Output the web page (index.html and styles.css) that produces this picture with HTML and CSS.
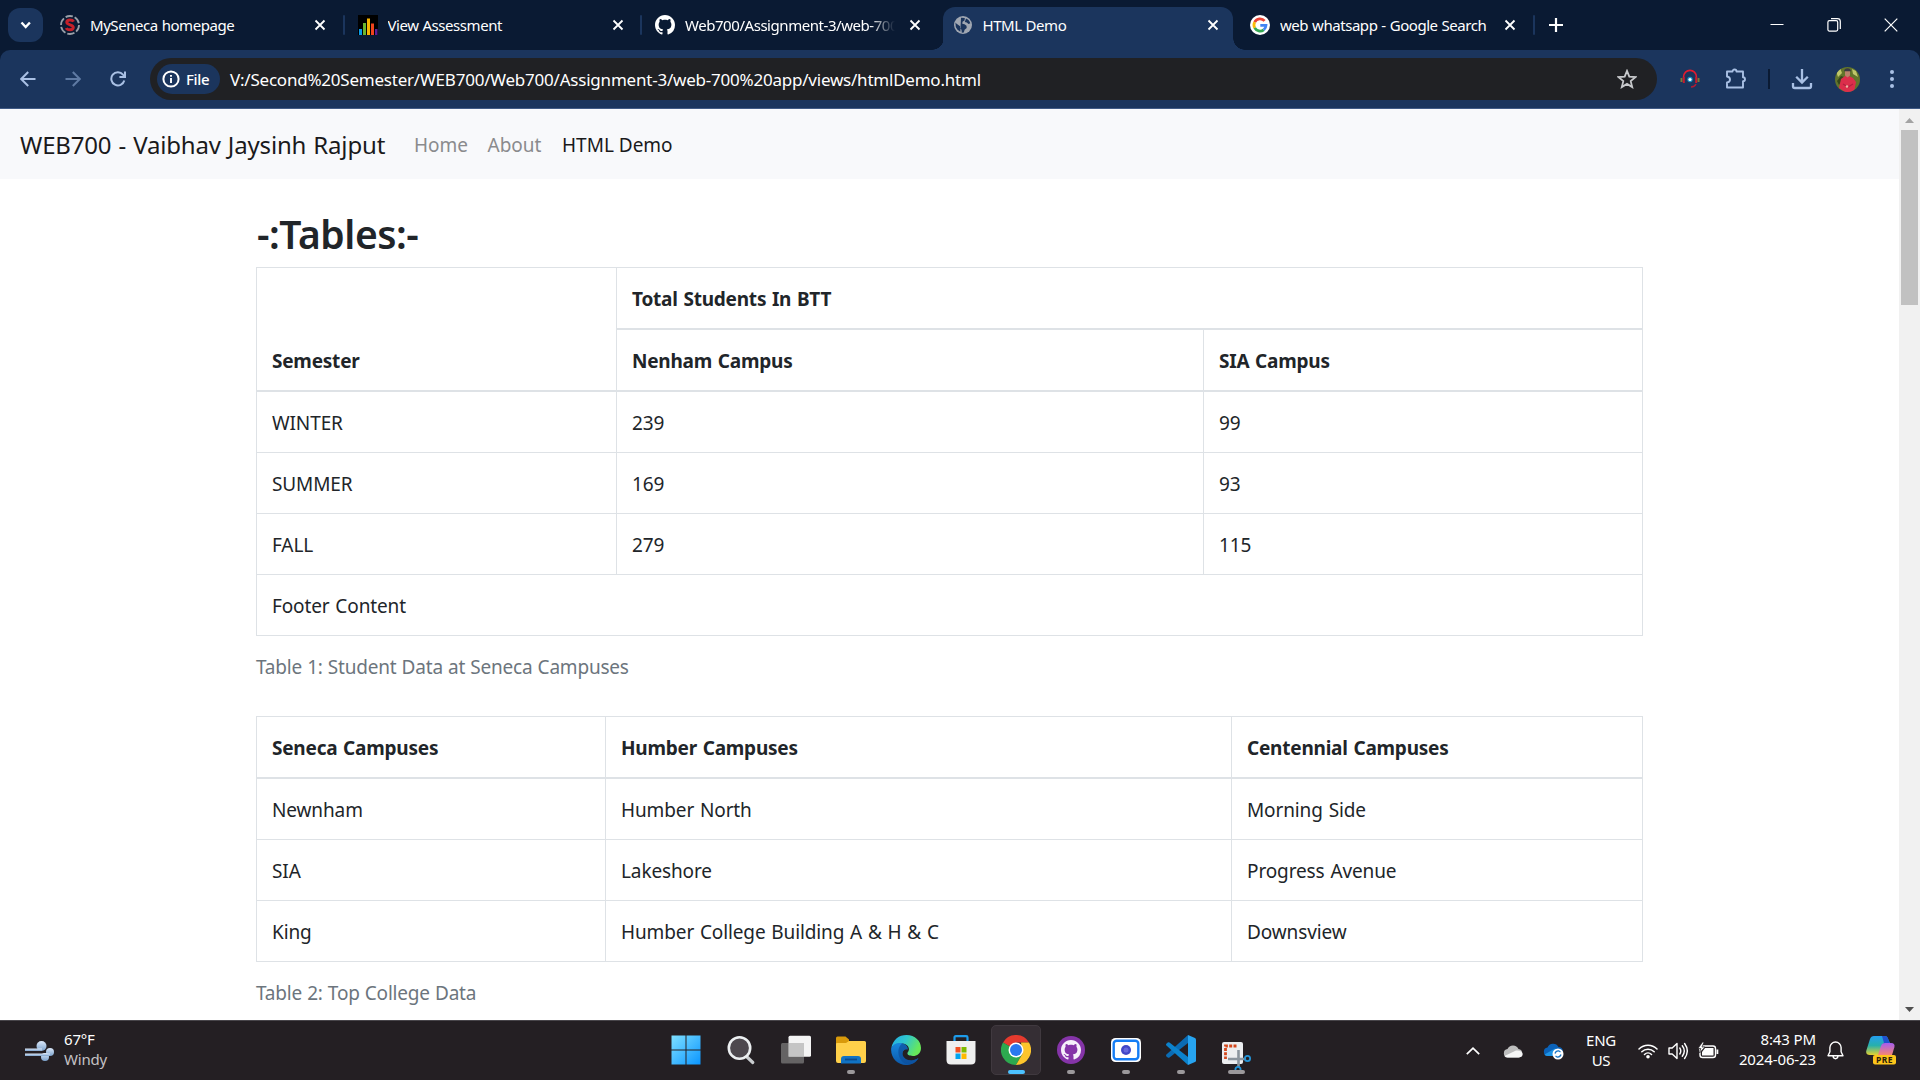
FILE: index.html
```html
<!DOCTYPE html>
<html lang="en">
<head>
<meta charset="utf-8">
<title>HTML Demo</title>
<link rel="stylesheet" href="styles.css">
</head>
<body>
<header class="tabstrip">
  <div class="tab-search"><svg width="35" height="34" viewBox="0 0 35 34"><path d="M13.5 14.5l4.2 4.5 4.2-4.5" fill="none" stroke="#fff" stroke-width="2.4"/></svg></div>
  <div class="tab">
    <svg class="favicon" viewBox="0 0 20 20"><circle cx="10" cy="10" r="9" fill="none" stroke="#9a9fa8" stroke-width="1.8" stroke-dasharray="7.4 2"/><path d="M13.6 6.6C12.5 4.6 7 4.2 6.8 7.2c-.2 3 6.700 2.400 6.500 5.300C13.100 15.600 7.300 15.200 6.300 13" fill="none" stroke="#c5202a" stroke-width="3"/></svg>
    <span class="tab-title">MySeneca homepage</span>
    <svg class="tab-close" viewBox="0 0 12 12"><path d="M1.500 1.500l9 9M10.500 1.500l-9 9"/></svg>
  </div>
  <div class="tab divided">
    <svg class="favicon" viewBox="0 0 20 20"><path d="M0 0h20v20H0z" fill="#000"/><path d="M1 14h3v6H1z" fill="#0a9be8"/><path d="M5 8h3v12H5z" fill="#6cb52d"/><path d="M9 3.500h3V20H9z" fill="#f7b500"/><path d="M13 8.500h3V20h-3z" fill="#f0441c"/><path d="M17 14h2.500v6H17z" fill="#5a1d9a"/></svg>
    <span class="tab-title">View Assessment</span>
    <svg class="tab-close" viewBox="0 0 12 12"><path d="M1.500 1.500l9 9M10.500 1.500l-9 9"/></svg>
  </div>
  <div class="tab divided">
    <svg class="favicon" viewBox="0 0 16 16"><path fill="#fff" d="M8 0C3.580 0 0 3.580 0 8c0 3.540 2.290 6.530 5.470 7.590.4.070.55-.17.55-.38 0-.19-.01-.82-.01-1.490-2.010.37-2.530-.49-2.690-.94-.09-.23-.48-.94-.82-1.130-.28-.15-.68-.52-.01-.53.63-.01 1.080.58 1.230.82.72 1.210 1.870.87 2.330.66.070-.52.28-.87.51-1.070-1.780-.2-3.640-.89-3.640-3.950 0-.87.31-1.590.82-2.150-.08-.2-.36-1.020.08-2.120 0 0 .67-.21 2.200.82.64-.18 1.320-.27 2-.27s1.360.09 2 .27c1.530-1.040 2.200-.82 2.200-.82.44 1.100.16 1.920.08 2.120.51.56.82 1.270.82 2.150 0 3.070-1.870 3.750-3.650 3.950.29.25.54.73.54 1.480 0 1.070-.01 1.930-.01 2.200 0 .21.15.46.55.38A8.010 8.010 0 0016 8c0-4.420-3.580-8-8-8z"/></svg>
    <span class="tab-title faded">Web700/Assignment-3/web-700</span>
    <svg class="tab-close" viewBox="0 0 12 12"><path d="M1.500 1.500l9 9M10.500 1.500l-9 9"/></svg>
  </div>
  <div class="tab active">
    <svg class="favicon globe" viewBox="0 0 18 18"><circle cx="9" cy="9" r="9" fill="#a0a7b2"/><path d="M7 1.800l3.800.2-.3 2.400-2 1.300-.2 2 2.200.5 2 1.500.2 2.300-2.100 1.800-.8 2.700-2 .2-.3-3-1.500-1.700.1-1.800-3.800-2.600-.9-1 .4 4.500 1.500 2.500 3 2.200" fill="#1b355d"/><path d="M12 2.500c2 .6 3.800 2.600 4.300 4.800l-1.800.6-1.700-1.300-2-.6z" fill="#1b355d"/></svg>
    <span class="tab-title">HTML Demo</span>
    <svg class="tab-close" viewBox="0 0 12 12"><path d="M1.500 1.500l9 9M10.500 1.500l-9 9"/></svg>
  </div>
  <div class="tab">
    <svg class="favicon" viewBox="0 0 20 20"><circle cx="10" cy="10" r="10" fill="#fff"/><g fill="none" stroke-width="2.800"><path d="M14.600 5.900A6 6 0 0 0 4.700 7.200" stroke="#ea4335"/><path d="M4.700 7.200a6 6 0 0 0 0 5.700" stroke="#fbbc05"/><path d="M4.700 12.900a6 6 0 0 0 9 1.900" stroke="#34a853"/><path d="M13.700 14.800A6 6 0 0 0 16 10.300H10.300" stroke="#4285f4"/></g></svg>
    <span class="tab-title">web whatsapp - Google Search</span>
    <svg class="tab-close" viewBox="0 0 12 12"><path d="M1.500 1.500l9 9M10.500 1.500l-9 9"/></svg>
  </div>
  <div class="new-tab divided"><svg width="14" height="14" viewBox="0 0 14 14"><path d="M7 0v14M0 7h14" stroke="#fff" stroke-width="2.200"/></svg></div>
  <div class="window-controls">
    <svg width="14" height="14" viewBox="0 0 14 14"><path d="M.5 6.500h13" stroke="#fff" stroke-width="1"/></svg>
    <svg width="14" height="14" viewBox="0 0 14 14"><path d="M4 .7h6.500a2.800 2.800 0 0 1 2.800 2.800V11" fill="none" stroke="#fff" stroke-width="1.200"/><rect x=".9" y="2.700" width="9.800" height="10.400" rx="1.500" fill="none" stroke="#fff" stroke-width="1.200"/></svg>
    <svg width="14" height="14" viewBox="0 0 14 14"><path d="M.7.700l12.600 12.600M13.300.700L.7 13.300" stroke="#fff" stroke-width="1.200"/></svg>
  </div>
</header>

<div class="toolbar-back">
<div class="toolbar">
  <div class="nav-buttons">
    <svg width="16" height="16" viewBox="0 0 16 16"><path d="M15.500 8H1.500M8.200 1L1.200 8l7 7" stroke="#a9c0e4"/></svg>
    <svg width="16" height="16" viewBox="0 0 16 16"><path d="M.5 8h14M7.800 1l7 7-7 7" stroke="#5f7aa3"/></svg>
    <svg width="16" height="16" viewBox="0 0 16 16"><path d="M14.300 9.500A6.600 6.600 0 1 1 13 3.600L15 5.700M15 .500v5.600H9.400" stroke="#a9c0e4"/></svg>
  </div>
  <div class="omnibox">
    <div class="chip">
      <svg width="18" height="18" viewBox="0 0 18 18"><circle cx="9" cy="9" r="7.600" fill="none" stroke="#fff" stroke-width="2"/><path d="M9 8v5M9 4.900v1.900" stroke="#fff" stroke-width="1.900"/></svg>
      <span>File</span>
    </div>
    <span class="url">V:/Second%20Semester/WEB700/Web700/Assignment-3/web-700%20app/views/htmlDemo.html</span>
    <svg class="star" width="20" height="20" viewBox="0 0 20 20"><path d="M10 1.900l2.300 5.700 6.100.5-4.700 4 1.500 6L10 14.900l-5.200 3.200 1.500-6-4.700-4 6.100-.5z" fill="none" stroke="#c7c9cc" stroke-width="1.800"/></svg>
  </div>
  <div class="actions">
    <svg width="20" height="20" viewBox="0 0 20 20"><path d="M3.500 8.500C3.500 -1 16.500 -1 16.500 8.500" fill="none" stroke="#e31b2e" stroke-width="1.600"/><path d="M.5 9h2v4h-2zM17.500 9h2v4h-2z" fill="#7d7a38"/><path d="M2.800 8h2v6h-2zM15.200 8h2v6h-2z" fill="#c51c2f"/><path d="M16 15c-.8 2-2.500 2.900-5 3" fill="none" stroke="#b11c35" stroke-width="1.300"/><circle cx="10" cy="10.500" r="2.700" fill="#198ec0"/><circle cx="10" cy="10.500" r="1.600" fill="#fff"/></svg>
    <svg class="puzzle" width="22" height="22" viewBox="0 0 22 22"><path d="M2 3.500h5.500a2 2 0 0 1 4 0H18v5.700a2 2 0 0 1 0 4V19.500H2v-5c4-.5 4-5.500 0-6z" fill="none" stroke="#a9c0e4" stroke-width="1.900" stroke-linejoin="round"/></svg>
    <i class="action-line"></i>
    <svg class="download" width="22" height="22" viewBox="0 0 22 22"><path d="M11 1v13M5.200 8.700l5.800 5.800 5.800-5.800M2 15v3.200q0 1.800 1.800 1.800h14.400q1.800 0 1.800-1.800V15" fill="none" stroke="#a9c0e4" stroke-width="2.300"/></svg>
    <svg class="avatar" width="25" height="25" viewBox="0 0 25 25"><defs><clipPath id="face"><circle cx="12.500" cy="12.500" r="12.500"/></clipPath></defs><g clip-path="url(#face)"><path d="M0 0h25v25H0z" fill="#62752b"/><path d="M1 4l4-3 2 5-4 4zM17 2l4 2 2 6-5-3z" fill="#bfc66a"/><path d="M2 14l4-5 3 1-5 8z" fill="#36471b"/><path d="M10 9l-4 3-2 9 6 4h9l2-10-3-4-4-2z" fill="#dc2e4b"/><path d="M10 4h5v4.500l-2.500 2L10 8.500z" fill="#b9816a"/><path d="M9 4.200C9 .2 16 .2 16 4.200z" fill="#3a3a42"/><path d="M8 17l5 3 5-3" fill="none" stroke="#b3203f" stroke-width="1.200"/><circle cx="12" cy="19.500" r="1.200" fill="#efb7a4"/></g></svg>
    <svg class="more" width="4" height="18" viewBox="0 0 4 18"><g fill="#a9c0e4"><circle cx="2" cy="2" r="2"/><circle cx="2" cy="9" r="2"/><circle cx="2" cy="16" r="2"/></g></svg>
  </div>
</div>
</div>

<div class="viewport">
  <main class="page">
    <nav class="navbar">
      <span class="brand">WEB700 - Vaibhav Jaysinh Rajput</span>
      <span class="link home">Home</span>
      <span class="link about">About</span>
      <span class="link current">HTML Demo</span>
    </nav>
    <div class="container">
      <h2>-:Tables:-</h2>
      <table>
        <caption>Table 1: Student Data at Seneca Campuses</caption>
        <colgroup><col class="a1"><col class="a2"><col></colgroup>
        <thead>
          <tr><th rowspan="2">Semester</th><th colspan="2">Total Students In BTT</th></tr>
          <tr><th>Nenham Campus</th><th>SIA Campus</th></tr>
        </thead>
        <tbody>
          <tr><td>WINTER</td><td>239</td><td>99</td></tr>
          <tr><td>SUMMER</td><td>169</td><td>93</td></tr>
          <tr><td>FALL</td><td>279</td><td>115</td></tr>
        </tbody>
        <tfoot><tr><td colspan="3">Footer Content</td></tr></tfoot>
      </table>
      <table>
        <caption>Table 2: Top College Data</caption>
        <colgroup><col class="b1"><col class="b2"><col></colgroup>
        <thead><tr><th>Seneca Campuses</th><th>Humber Campuses</th><th>Centennial Campuses</th></tr></thead>
        <tbody>
          <tr><td>Newnham</td><td>Humber North</td><td>Morning Side</td></tr>
          <tr><td>SIA</td><td>Lakeshore</td><td>Progress Avenue</td></tr>
          <tr><td>King</td><td>Humber College Building A &amp; H &amp; C</td><td>Downsview</td></tr>
        </tbody>
      </table>
    </div>
  </main>
  <aside class="scrollbar">
    <svg width="21" height="21" viewBox="0 0 21 21"><path d="M6 14l4.500-5 4.500 5z" fill="#a3a3a3"/></svg>
    <div class="thumb"></div>
    <svg class="down" width="21" height="21" viewBox="0 0 21 21"><path d="M6 8l4.500 5L15 8z" fill="#505050"/></svg>
  </aside>
</div>

<footer class="taskbar">
  <div class="weather">
    <svg width="30" height="22" viewBox="0 0 30 22"><defs><linearGradient id="wind" x1="0" y1="0" x2="0" y2="1"><stop offset="0" stop-color="#dce9fa"/><stop offset="1" stop-color="#7ba1cb"/></linearGradient></defs><g fill="url(#wind)"><circle cx="16.500" cy="6" r="5"/><circle cx="25" cy="12" r="4"/><circle cx="20" cy="17" r="4"/><path d="M0 8.500h17v2.500H0z"/><path d="M0 13.500h25v2.500H0z"/></g></svg>
    <div class="weather-text"><span>67°F</span><span class="dim">Windy</span></div>
  </div>
  <div class="apps">
    <div class="app"><svg width="30" height="30" viewBox="0 0 30 30"><defs><linearGradient id="win" x1="0" y1="0" x2="1" y2="1"><stop offset="0" stop-color="#7fe0ff"/><stop offset="1" stop-color="#0a95ff"/></linearGradient></defs><path d="M.5.500h14v14H.5zM15.500.500h14v14h-14zM.5 15.500h14v14H.5zM15.500 15.500h14v14h-14z" fill="url(#win)"/></svg></div>
    <div class="app"><svg width="30" height="30" viewBox="0 0 30 30"><path d="M20.500 21.500l6.300 6" stroke="#c9cccf" stroke-width="3.200" stroke-linecap="round"/><circle cx="13.500" cy="13" r="10.700" fill="#4d484e" stroke="#eceff1" stroke-width="2.600"/></svg></div>
    <div class="app"><svg width="30" height="30" viewBox="0 0 30 30"><rect x="7.500" y=".8" width="22.500" height="21" rx="1.500" fill="#f4f4f4"/><rect x="0" y="8" width="23" height="20.500" rx="1.500" fill="#777" opacity=".78"/><path d="M7.500 8H23v13.800H7.500z" fill="#c5c5c5"/></svg></div>
    <div class="app"><svg width="30" height="30" viewBox="0 0 30 30"><path d="M0 3q0-1.500 1.500-1.500h8L13 4.500v6H0z" fill="#d99a0b"/><path d="M0 9q0-1 1-1h9l3-2h15.500q1.500 0 1.500 1.500V26q0 2-2 2H2q-2 0-2-2z" fill="#ffd04a"/><path d="M5 28.500V24q0-3 3-3h14q3 0 3 3v4.500z" fill="#1173c4"/><path d="M9 24.500h12" stroke="#0a4b8e" stroke-width="1.800"/></svg><i class="dot"></i></div>
    <div class="app"><svg width="30" height="30" viewBox="0 0 30 30"><defs><linearGradient id="edge1" x1="0" y1="0" x2="1" y2=".4"><stop offset="0" stop-color="#20a9e8"/><stop offset=".5" stop-color="#30c7cd"/><stop offset="1" stop-color="#67e85a"/></linearGradient><linearGradient id="edge2" x1="0" y1="0" x2="0" y2="1"><stop offset="0" stop-color="#1787dd"/><stop offset="1" stop-color="#0c58a9"/></linearGradient></defs><path d="M.3 13C2 4.500 8 0 15.500 0 24 0 30 6 30 13c0 5.500-4 8-8 8-4.500 0-6-1.800-5.500-3.200C20 14 17 8.500 11 8.500c-5 0-9 2-10.700 4.500z" fill="url(#edge1)"/><path d="M.2 13C2 9 7 7 11.500 8.500c4 1.200 5.500 4 5 6-2.500-1-5.500 1-5 5 .7 5 9 8.500 16 3.500C25 27.500 20.500 30 15 30 6.500 30-.8 22.500.2 13z" fill="url(#edge2)"/><path d="M11.500 8.500C5 12 6 26 16 29.500 21 30 25 27.500 27.500 23c-7 5-15.300 1.500-16-3.500-.5-4 2.500-6 5-5 .5-2-1-4.800-5-6z" fill="#0d4f9b" opacity=".7"/></svg></div>
    <div class="app"><svg width="30" height="30" viewBox="0 0 30 30"><path d="M8.500 7V2.500Q8.500 1.200 9.800 1.200h10.400q1.300 0 1.300 1.300V7" fill="none" stroke="#1d9bea" stroke-width="2.200"/><path d="M.5 6h29v19q0 4.500-4.500 4.500H5Q.5 29.500.5 25z" fill="#efefef"/><path d="M9.500 12h5v5.500h-5z" fill="#f25022"/><path d="M15.500 12h5v5.500h-5z" fill="#7fba00"/><path d="M9.500 18.500h5v5.500h-5z" fill="#00a4ef"/><path d="M15.500 18.500h5v5.500h-5z" fill="#ffb900"/></svg></div>
    <div class="app focused"><svg width="30" height="30" viewBox="0 0 30 30"><path d="M15 15L2 7.500A15 15 0 0 1 28 7.500H15z" fill="#e53a2e"/><path d="M15 15L2 7.500A15 15 0 0 0 15 30l6.500-11.200z" fill="#2da94f"/><path d="M28 7.500A15 15 0 0 1 15 30l6.500-11.200L20 7.500z" fill="#fdc52c"/><circle cx="15" cy="15" r="7.500" fill="#fff"/><circle cx="15" cy="15" r="6" fill="#2a78ee"/></svg><i class="dot long"></i></div>
    <div class="app"><svg width="28" height="28" viewBox="0 0 28 28"><circle cx="14" cy="14" r="14" fill="#8534a8"/><path transform="translate(4 4) scale(1.250)" fill="#f6f0fa" d="M8 0C3.580 0 0 3.580 0 8c0 3.540 2.290 6.530 5.470 7.590.4.070.55-.17.55-.38 0-.19-.01-.82-.01-1.490-2.010.37-2.530-.49-2.690-.94-.09-.23-.48-.94-.82-1.130-.28-.15-.68-.52-.01-.53.63-.01 1.080.58 1.230.82.72 1.210 1.870.87 2.330.66.070-.52.28-.87.51-1.070-1.780-.2-3.640-.89-3.640-3.950 0-.87.31-1.590.82-2.150-.08-.2-.36-1.020.08-2.120 0 0 .67-.21 2.200.82.64-.18 1.320-.27 2-.27s1.360.09 2 .27c1.530-1.040 2.200-.82 2.200-.82.44 1.100.16 1.920.08 2.120.51.56.82 1.270.82 2.150 0 3.070-1.870 3.750-3.650 3.950.29.25.54.73.54 1.480 0 1.070-.01 1.930-.01 2.200 0 .21.15.46.55.38A8.010 8.010 0 0016 8c0-4.420-3.580-8-8-8z"/></svg><i class="dot"></i></div>
    <div class="app"><svg width="30" height="24" viewBox="0 0 30 24"><rect width="30" height="24" rx="4.500" fill="#fff"/><rect x="2.700" y="2.700" width="24.600" height="18.600" rx="3" fill="#fff" stroke="#157df5" stroke-width="2.400"/><circle cx="15" cy="12" r="5" fill="#4247c7"/><circle cx="15" cy="12" r="2.500" fill="#6668dd"/></svg><i class="dot"></i></div>
    <div class="app"><svg width="30" height="30" viewBox="0 0 30 30"><path d="M22 0v8L3.500 22.500q-1 .7-1.800 0L.4 21.200q-.8-.9 0-1.700z" fill="#0b6cb4"/><path d="M22 30v-8L3.500 7.500q-1-.7-1.800 0L.4 8.800q-.8.900 0 1.700z" fill="#0c82cc"/><path d="M22 0l7 3q1 .5 1 1.500v21q0 1-1 1.500l-7 3z" fill="#27a4f0"/></svg><i class="dot"></i></div>
    <div class="app snip"><svg width="30" height="32" viewBox="0 0 30 32"><rect x="1" y="1" width="21" height="22" rx="2" fill="#eceef0"/><path d="M15.500 5H4.500v13" fill="none" stroke="#d4471c" stroke-width="2.800" stroke-dasharray="3 1.300"/><path d="M17.500 9v17M7 18h18" stroke="#8b959e" stroke-width="2.600"/><circle cx="26.500" cy="17.500" r="2.600" fill="none" stroke="#2495d8" stroke-width="1.800"/><circle cx="17" cy="28.500" r="2.600" fill="none" stroke="#2495d8" stroke-width="1.800"/></svg><i class="dot wide"></i></div>
  </div>
  <div class="tray">
    <svg class="t-chev" width="14" height="8" viewBox="0 0 14 8"><path d="M.8 7.200L7 1.200l6.200 6" fill="none" stroke="#fff" stroke-width="1.700"/></svg>
    <svg class="t-cloud" width="20" height="14" viewBox="0 0 20 14"><path d="M4.500 13.500a4.300 4.300 0 0 1 0-8.500A6 6 0 0 1 15.500 5a4.300 4.300 0 0 1 0 8.500z" fill="#bdbdbd"/><path d="M1.500 12L13 6.500q6-.5 6.700 3.500 0 3-3.700 3.500H4.500q-2 0-3-1.500z" fill="#f6f6f6"/></svg>
    <svg class="t-drive" width="21" height="18" viewBox="0 0 21 18"><path d="M4.500 14a4.300 4.300 0 0 1 0-8.500A6 6 0 0 1 15.500 5a4.300 4.300 0 0 1 0 9z" fill="#0b62b8"/><path d="M1.500 12.500L12 6.500l7 3-3.500 4.500h-11q-2 0-3-1.500z" fill="#1d93e6"/><circle cx="15" cy="12" r="5.500" fill="#fff"/><path d="M12 11.500q1-3 4-2.500l1.500 1M18 12.500q-1 3-4 2.500l-1.500-1" fill="none" stroke="#1673c4" stroke-width="1.300"/></svg>
    <div class="lang"><span>ENG</span><span>US</span></div>
    <svg class="t-wifi" width="20" height="16" viewBox="0 0 20 16"><g fill="none" stroke="#fff" stroke-width="1.500" stroke-linecap="round"><path d="M1 6a12.700 12.700 0 0 1 18 0M3.800 8.800a8.800 8.800 0 0 1 12.400 0M6.500 11.500a5 5 0 0 1 7 0"/></g><circle cx="10" cy="13.800" r="1.800" fill="#fff"/></svg>
    <svg class="t-sound" width="20" height="18" viewBox="0 0 20 18"><g fill="none" stroke="#fff" stroke-width="1.400" stroke-linejoin="round" stroke-linecap="round"><path d="M1 6h3.200L9 1.500v15L4.200 12H1zM11.800 6q2 3 0 6M14.300 3.800q4 5.200 0 10.400M16.600 1.500q5.400 7.500 0 15"/></g></svg>
    <svg class="t-batt" width="21" height="17" viewBox="0 0 21 17"><rect x="2" y="4" width="15.500" height="11.500" rx="2.500" fill="none" stroke="#fff" stroke-width="1.400"/><path d="M7 6h8.500v7.500H4V10z" fill="#fff"/><path d="M18.500 7.500h1.800v4.500h-1.800z" fill="#fff"/><path d="M4.500 0L0 6.500h2.800L1.500 11 7 5H4l2-5z" fill="#fff" stroke="#241f24" stroke-width=".7"/></svg>
    <div class="clock"><span>8:43 PM</span><span>2024-06-23</span></div>
    <svg class="t-bell" width="17" height="19" viewBox="0 0 17 19"><path d="M8.500 1a5.600 5.600 0 0 0-5.600 5.600v4.200L1 14.700h15l-1.900-3.900V6.600A5.600 5.600 0 0 0 8.500 1zM6 15q.3 2.700 2.500 2.700T11 15" fill="none" stroke="#fff" stroke-width="1.400" stroke-linejoin="round"/></svg>
    <svg class="t-copilot" width="30" height="29" viewBox="0 0 30 29"><defs><linearGradient id="cp1" x1="0" y1="0" x2="0" y2="1"><stop offset="0" stop-color="#249ef0"/><stop offset=".5" stop-color="#27b0ab"/><stop offset="1" stop-color="#e6d22f"/></linearGradient><linearGradient id="cp2" x1="0" y1="0" x2="0" y2="1"><stop offset="0" stop-color="#a55df0"/><stop offset="1" stop-color="#f58673"/></linearGradient></defs><path d="M8 0h11q2.500 0 3.500 4L24 7h-5q-2 0-3 3l-3 9H4q-5 0-3.500-5L4 3q1-3 4-3z" fill="url(#cp1)"/><path d="M16 0h3q2.500 0 3.500 4L24 7h-6z" fill="#2052cf"/><path d="M19 7h6q4.500 0 3.300 4.500L26 19H12l3-9q1-3 4-3z" fill="url(#cp2)"/><rect x="7" y="19" width="23" height="9.500" rx="2" fill="#fdc51b"/><text x="18.500" y="26.800" text-anchor="middle" class="pre">PRE</text></svg>
  </div>
</footer>
</body>
</html>
```
FILE: styles.css
```css
* { box-sizing: border-box; }
body {
  margin: 0;
  width: 1920px;
  height: 1080px;
  overflow: hidden;
  display: flex;
  flex-direction: column;
  font-family: "Noto Sans", "Open Sans", sans-serif;
  background: #fff;
}
svg { display: block; flex: none; }
span { white-space: nowrap; }

/* Tab strip */
.tabstrip {
  height: 50px;
  flex: none;
  display: flex;
  background: #0a1a33;
  padding-left: 8px;
}
.tab-search {
  width: 35px;
  height: 34px;
  margin: 8px 4px 0 0;
  border-radius: 12px;
  background: #1b355d;
}
.tab {
  position: relative;
  width: 297.5px;
  height: 50px;
  display: flex;
  align-items: center;
  padding: 0 18px 0 13px;
  color: #fff;
}
.divided::before {
  content: "";
  position: absolute;
  left: -2px;
  top: 15px;
  width: 2px;
  height: 20px;
  border-radius: 1px;
  background: #1b355d;
}
.favicon { width: 20px; height: 20px; }
.tab-title {
  width: 210px;
  margin-left: 10px;
  overflow: hidden;
  font-size: 15px;
  line-height: 22px;
  letter-spacing: -0.45px;
  word-spacing: 0.5px;
}
.faded {
  -webkit-mask-image: linear-gradient(90deg, #000 88%, transparent 100%);
  mask-image: linear-gradient(90deg, #000 88%, transparent 100%);
}
.tab-close {
  width: 12px;
  height: 12px;
  margin-left: 14px;
  fill: none;
  stroke: #fff;
  stroke-width: 1.8;
}
.active {
  align-self: flex-end;
  height: 43px;
  padding-bottom: 7px;
}
.active > * { position: relative; }
.active::before {
  content: "";
  position: absolute;
  inset: 0 4px 0 3.500px;
  border-radius: 12px 12px 0 0;
  background: #1b355d;
}
.active::after {
  content: "";
  position: absolute;
  left: -8px;
  right: -8px;
  bottom: 0;
  height: 12px;
  background:
    radial-gradient(circle at 0 0, transparent 11.500px, #1b355d 12px) left / 12px 12px no-repeat,
    radial-gradient(circle at 100% 0, transparent 11.500px, #1b355d 12px) right / 12px 12px no-repeat;
}
.globe { width: 18px; height: 18px; margin: 0 1px; }
.new-tab {
  position: relative;
  display: flex;
  align-items: center;
  padding-left: 14px;
  width: 60px;
}
.window-controls {
  margin-left: auto;
  display: flex;
  align-items: center;
  gap: 43px;
  padding-right: 22px;
}

/* Toolbar */
.toolbar-back { flex: none; background: #0a1a33; }
.toolbar {
  height: 59px;
  display: flex;
  align-items: center;
  background: #1b355d;
  border-bottom: 1px solid #405a85;
  border-radius: 10px 10px 0 0;
}
.nav-buttons {
  width: 150px;
  display: flex;
  gap: 29px;
  padding-left: 20px;
}
.nav-buttons path { fill: none; stroke-width: 2; }
.omnibox {
  width: 1507px;
  height: 42px;
  display: flex;
  align-items: center;
  padding: 0 20px 0 7px;
  border-radius: 21px;
  background: #202124;
  color: #fff;
}
.chip {
  width: 63px;
  height: 30px;
  display: flex;
  align-items: center;
  gap: 6px;
  padding-left: 5px;
  border-radius: 15px;
  background: #1b355d;
  font-size: 15px;
  font-weight: 500;
  letter-spacing: -0.3px;
}
.url { margin-left: 10px; font-size: 17px; letter-spacing: -0.22px; }
.star { margin-left: auto; }
.actions {
  flex: 1;
  display: flex;
  align-items: center;
  padding-left: 23px;
}
.puzzle { margin-left: 25px; }
.action-line { width: 2px; height: 20px; margin: 0 21px; background: #0a1a33; }
.avatar { margin-left: 22px; }
.more { margin-left: 30px; }

/* Web page */
.viewport { flex: 1; min-height: 0; display: flex; overflow: hidden; }
.page { width: 1899px; overflow: hidden; color: #212529; }
.navbar {
  height: 70px;
  display: flex;
  align-items: center;
  padding-left: 20px;
  background: #f8f9fb;
}
.brand {
  width: 394px;
  font-size: 24px;
  letter-spacing: -0.17px;
  word-spacing: 1px;
  color: #1a1a1b;
}
.link { padding-top: 2px; font-size: 19px; color: #8a8b8d; }
.home { width: 73.5px; }
.about { width: 74.5px; }
.current { color: #1a1a1b; }
.container { width: 1387px; margin: 30px 0 0 256px; }
h2 {
  margin: 0 0 9px;
  padding: 1px 0 0 1px;
  font-size: 39px;
  line-height: 48px;
  font-weight: 600;
  letter-spacing: -0.45px;
}
table {
  width: 1387px;
  margin-bottom: 20px;
  table-layout: fixed;
  border-collapse: collapse;
  font-size: 19px;
  line-height: 30px;
  letter-spacing: -0.12px;
  word-spacing: 1px;
}
caption {
  caption-side: bottom;
  padding: 16px 0 14px;
  text-align: left;
  letter-spacing: -0.2px;
  word-spacing: 0.4px;
  color: #6c757d;
}
.a1 { width: 360px; }
.a2 { width: 587px; }
.b1 { width: 349px; }
.b2 { width: 626px; }
th, td {
  padding: 16px 15px 14px;
  border: 1px solid #dee2e6;
  text-align: left;
  vertical-align: top;
}
th {
  font-weight: 700;
  vertical-align: bottom;
  letter-spacing: -0.22px;
}
thead th { border-bottom-width: 2px; }

/* Scrollbar */
.scrollbar {
  width: 21px;
  display: flex;
  flex-direction: column;
  align-items: center;
  background: #f1f1f1;
}
.thumb { width: 17px; height: 175px; background: #c1c1c1; }
.down { margin-top: auto; }

/* Taskbar */
.taskbar {
  height: 60px;
  flex: none;
  display: flex;
  background: #241f23;
  border-top: 1px solid #48454a;
  color: #fff;
  font-size: 15px;
  line-height: 20px;
}
.weather {
  width: 658px;
  display: flex;
  align-items: center;
  gap: 9px;
  padding-left: 25px;
  letter-spacing: -0.2px;
}
.weather-text { display: flex; flex-direction: column; padding-bottom: 4px; }
.dim { color: #c4c1c4; }
.apps { display: flex; }
.app {
  position: relative;
  width: 55px;
  display: flex;
  align-items: center;
  justify-content: center;
}
.focused::before {
  content: "";
  position: absolute;
  inset: 4px 2.500px 5px 3px;
  border: 1px solid #40393f;
  border-radius: 5px;
  background: #352e34;
}
.app svg { position: relative; top: -1px; }
.snip { padding-top: 14px; }
.dot {
  position: absolute;
  left: 50%;
  bottom: 6px;
  width: 8px;
  height: 4px;
  margin-left: -4px;
  border-radius: 2px;
  background: #9b989b;
}
.long { width: 17px; margin-left: -8px; background: #4cc2ff; }
.wide { width: 17px; margin-left: -8px; }
.tray {
  flex: 1;
  display: flex;
  align-items: center;
  padding-left: 203px;
}
.t-cloud { margin-left: 23px; }
.t-drive { margin-left: 20px; }
.lang, .clock { display: flex; flex-direction: column; }
.lang {
  width: 40px;
  margin-left: 17px;
  padding-bottom: 2px;
  align-items: center;
  letter-spacing: -0.3px;
}
.t-wifi { margin-left: 17px; }
.t-sound { margin-left: 10px; }
.t-batt { margin-left: 10px; }
.clock {
  width: 97px;
  padding-bottom: 4px;
  align-items: flex-end;
  letter-spacing: -0.12px;
}
.t-bell { margin-left: 11px; }
.t-copilot { margin-left: 22px; }
.pre { font: 700 8.500px "Noto Sans", sans-serif; letter-spacing: .4px; fill: #2a210b; }
```
